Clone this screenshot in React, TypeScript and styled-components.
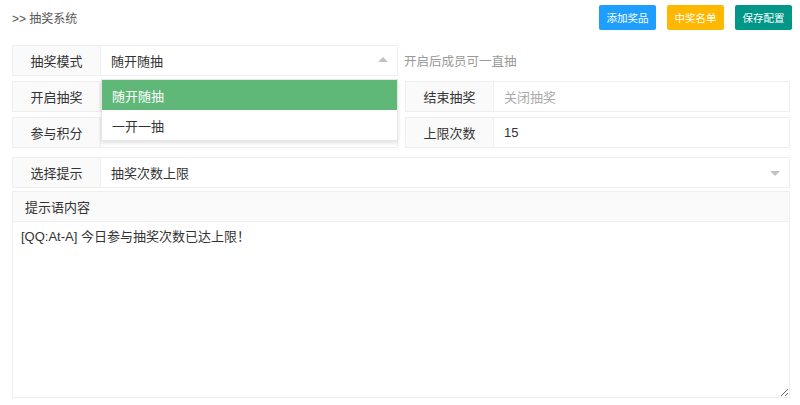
import React from "react";
import styled, { createGlobalStyle } from "styled-components";

const Global = createGlobalStyle`
  html, body { margin: 0; padding: 0; background: #fff; }
  body { font-family: "Microsoft YaHei", "Liberation Sans", "Noto Sans CJK SC", sans-serif; color: #333; }
  * { box-sizing: border-box; }
`;

const Page = styled.div`
  width: 800px;
  height: 405px;
  padding: 0 10px 0 12px;
  display: flex;
  flex-direction: column;
`;

const Header = styled.div`
  height: 35px;
  display: flex;
  align-items: center;
  justify-content: space-between;
`;

const Title = styled.div`
  font-size: 12px;
  color: #555;
`;

const Buttons = styled.div`
  display: flex;
  gap: 11px;
  margin-right: -2px;
`;

const Btn = styled.button<{ $bg: string }>`
  width: 57px;
  height: 25px;
  border: none;
  border-radius: 2px;
  background: ${(p) => p.$bg};
  color: #fff;
  font-size: 10.5px;
  font-family: inherit;
  padding: 0;
`;

const Grid = styled.div<{ $top: number }>`
  margin-top: ${(p) => p.$top}px;
  display: grid;
  grid-template-columns: 386px 385px;
  column-gap: 7px;
  row-gap: 5px;
`;

const Item = styled.div<{ $full?: boolean }>`
  display: flex;
  height: 31px;
  position: relative;
  grid-column: ${(p) => (p.$full ? "1 / span 2" : "auto")};
`;

const Label = styled.div`
  width: 89px;
  flex: none;
  display: flex;
  align-items: center;
  justify-content: center;
  background: #fafafa;
  border: 1px solid #efefef;
  font-size: 13px;
  color: #333;
`;

const Field = styled.div<{ $muted?: boolean }>`
  flex: 1;
  display: flex;
  align-items: center;
  padding: 0 10px;
  border: 1px solid #efefef;
  border-left: none;
  font-size: 13px;
  color: ${(p) => (p.$muted ? "#aaa" : "#333")};
  position: relative;
`;

const Aux = styled.div`
  display: flex;
  align-items: center;
  font-size: 12.5px;
  color: #999;
  margin-left: -1px;
`;

const Arrow = styled.span<{ $up?: boolean }>`
  position: absolute;
  right: 9px;
  top: 50%;
  margin-top: ${(p) => (p.$up ? "-4px" : "-2px")};
  width: 0;
  height: 0;
  border-left: 5px solid transparent;
  border-right: 5px solid transparent;
  ${(p) =>
    p.$up
      ? "border-bottom: 5px solid #c2c2c2;"
      : "border-top: 5px solid #c2c2c2;"}
`;

const Menu = styled.div`
  position: absolute;
  left: 89px;
  right: 0;
  top: 34px;
  background: #fff;
  border: 1px solid #e6e6e6;
  box-shadow: 0 2px 4px rgba(0, 0, 0, 0.12);
  z-index: 10;
`;

const Option = styled.div<{ $active?: boolean }>`
  height: 30px;
  display: flex;
  align-items: center;
  padding: 0 10px;
  font-size: 13px;
  background: ${(p) => (p.$active ? "#5FB878" : "#fff")};
  color: ${(p) => (p.$active ? "#fff" : "#333")};
`;

const Panel = styled.div`
  margin-top: 3px;
  flex: 1;
  display: flex;
  flex-direction: column;
  margin-bottom: 7px;
  width: 778px;
`;

const PanelHead = styled.div`
  height: 31px;
  display: flex;
  align-items: center;
  padding: 0 12px;
  background: #fafafa;
  border: 1px solid #efefef;
  font-size: 13px;
  color: #333;
`;

const Area = styled.textarea`
  flex: 1;
  border: 1px solid #efefef;
  border-top: none;
  padding: 6px 8px;
  font-family: inherit;
  font-size: 13px;
  color: #333;
  resize: vertical;
  outline: none;
  line-height: 18px;
`;

export default function App() {
  return (
    <>
      <Global />
      <Page>
        <Header>
          <Title>&gt;&gt; 抽奖系统</Title>
          <Buttons>
            <Btn $bg="#1E9FFF">添加奖品</Btn>
            <Btn $bg="#FFB800">中奖名单</Btn>
            <Btn $bg="#009688">保存配置</Btn>
          </Buttons>
        </Header>
        <Grid $top={10}>
          <Item>
            <Label>抽奖模式</Label>
            <Field>
              随开随抽
              <Arrow $up />
            </Field>
            <Menu>
              <Option $active>随开随抽</Option>
              <Option>一开一抽</Option>
            </Menu>
          </Item>
          <Aux>开启后成员可一直抽</Aux>
          <Item>
            <Label>开启抽奖</Label>
            <Field />
          </Item>
          <Item>
            <Label>结束抽奖</Label>
            <Field $muted>关闭抽奖</Field>
          </Item>
          <Item>
            <Label>参与积分</Label>
            <Field />
          </Item>
          <Item>
            <Label>上限次数</Label>
            <Field>15</Field>
          </Item>
        </Grid>
        <Grid $top={9}>
          <Item $full>
            <Label>选择提示</Label>
            <Field>
              抽奖次数上限
              <Arrow />
            </Field>
          </Item>
        </Grid>
        <Panel>
          <PanelHead>提示语内容</PanelHead>
          <Area defaultValue="[QQ:At-A] 今日参与抽奖次数已达上限！" />
        </Panel>
      </Page>
    </>
  );
}
